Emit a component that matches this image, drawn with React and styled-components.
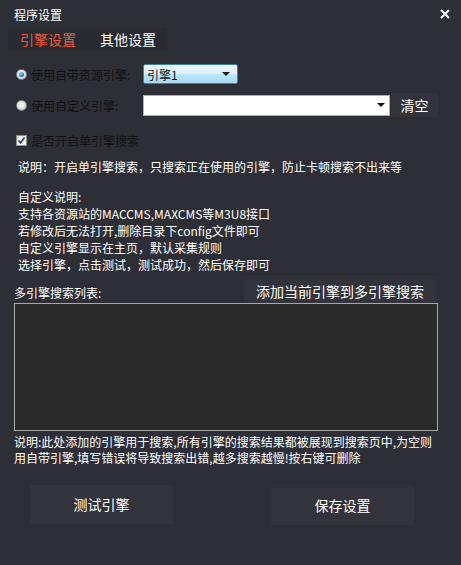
import React from 'react'
import styled, { createGlobalStyle } from 'styled-components'

/* ========================================================================== */
const GlobalStyle = createGlobalStyle`
  body {
    margin: 0;
    background: #2e2e36;
    font-family: "Noto Sans CJK SC", "Noto Sans", sans-serif;
  }
`
const Window = styled.div`
  width: 461px;
  height: 565px;
  background: #2e2e36;
  color: #fff;
  font-size: 12px;
  box-sizing: border-box;
  display: flex;
  flex-direction: column;
  overflow: hidden;
`
const TitleBar = styled.div`
  height: 28px;
  padding: 0 11px 0 14px;
  display: flex;
  align-items: center;
  justify-content: space-between;
  font-size: 12px;
`
const TabBar = styled.div`
  margin-left: 8px;
  width: 159px;
  height: 23px;
  background: #2a2a31;
  display: flex;
  align-items: center;
  padding-left: 12px;
  gap: 24px;
  box-sizing: border-box;
`
const Tab = styled.div`
  font-size: 14px;
  line-height: 23px;
  color: ${p => (p.$active ? '#ea5a3c' : '#fff')};
`
const Body = styled.div`
  padding: 0 16px 0 16px;
  display: flex;
  flex-direction: column;
`
const Row = styled.div`
  display: flex;
  align-items: center;
  height: ${p => p.$h}px;
  margin-top: ${p => p.$mt || 0}px;
`
const Label = styled.label`
  width: ${p => (p.$w ? `${p.$w}px` : 'auto')};
  color: #111;
  font-size: 12px;
  white-space: nowrap;
  display: flex;
  align-items: center;
  gap: 4px;
  flex-shrink: 0;
`
const Radio = styled.span`
  width: 11px;
  height: 11px;
  border-radius: 50%;
  box-sizing: border-box;
  border: 1px solid #8a8a8a;
  background: radial-gradient(circle at 45% 40%, #ffffff 0%, #dcdcdc 60%, #b8b8b8 100%);
  display: flex;
  align-items: center;
  justify-content: center;
  &::after {
    content: '';
    display: ${p => (p.$checked ? 'block' : 'none')};
    width: 5px;
    height: 5px;
    border-radius: 50%;
    background: radial-gradient(circle at 40% 35%, #8fd6ff 0%, #1a7fd0 60%, #0b4f8f 100%);
  }
`
const Select = styled.div`
  width: 95px;
  height: 20px;
  box-sizing: border-box;
  border: 1px solid #3c7fb1;
  border-radius: 2px;
  background: linear-gradient(#ecf7fd, #d9f0fc 50%, #bee6fd 51%, #a7d9f5);
  color: #111;
  display: flex;
  align-items: center;
  justify-content: space-between;
  padding: 0 7px 0 3px;
  font-size: 12px;
`
const Combo = styled.div`
  width: 247px;
  height: 21px;
  box-sizing: border-box;
  border: 1px solid #b0b0b0;
  background: #fff;
  display: flex;
  align-items: center;
  justify-content: flex-end;
  padding-right: 4px;
  margin-right: 1px;
`
const Arrow = styled.span`
  width: 0;
  height: 0;
  border-left: 4px solid transparent;
  border-right: 4px solid transparent;
  border-top: 4px solid #111;
`
const DarkButton = styled.div`
  background: #33333b;
  color: #fff;
  font-size: 14px;
  display: flex;
  align-items: center;
  justify-content: center;
  width: ${p => p.$w}px;
  height: ${p => p.$h}px;
  flex-shrink: 0;
`
const Check = styled.span`
  width: 11px;
  height: 11px;
  box-sizing: border-box;
  border: 1px solid #8f8f8f;
  background: linear-gradient(#e6e6e6, #ffffff);
  display: flex;
  align-items: center;
  justify-content: center;
`
const Note = styled.div`
  padding-left: 2px;
  line-height: ${p => p.$lh || 17.5}px;
  margin-top: ${p => p.$mt || 0}px;
`
const ListHeader = styled.div`
  margin: 6px 0 0 -2px;
  width: 422px;
  display: flex;
  align-items: flex-end;
  justify-content: space-between;
`
const ListLabel = styled.span`
  padding-bottom: 2px;
`
const ListBox = styled.div`
  margin-left: -2px;
  width: 424px;
  height: 128px;
  box-sizing: border-box;
  border: 1px solid #a8a8a8;
  background: #2a2a2a;
`
const BottomNote = styled.div`
  margin: 3px 0 0 -2px;
  line-height: 16.5px;
`
const Footer = styled.div`
  display: flex;
  justify-content: space-between;
  padding: 0 47px 0 30px;
  margin-top: 18px;
  align-items: flex-start;
`

/* ========================================================================== */
const CloseIcon = () => (
  <svg width="10" height="10" viewBox="0 0 10 10">
    <path d="M1 1 L9 9 M9 1 L1 9" stroke="#fff" strokeWidth="2" />
  </svg>
)

const Tick = () => (
  <svg width="9" height="9" viewBox="0 0 9 9">
    <path d="M1.5 4.5 L3.5 7 L7.5 1.5" stroke="#2a3d8f" strokeWidth="1.6" fill="none" />
  </svg>
)

export default function App() {
  return (
    <Window>
      <GlobalStyle />
      <TitleBar>
        <span>程序设置</span>
        <CloseIcon />
      </TitleBar>
      <TabBar>
        <Tab $active>引擎设置</Tab>
        <Tab>其他设置</Tab>
      </TabBar>

      <Body>
        <Row $h={20} $mt={13}>
          <Label $w={127}><Radio $checked />使用自带资源引擎:</Label>
          <Select>
            <span>引擎1</span>
            <Arrow />
          </Select>
        </Row>

        <Row $h={24} $mt={9}>
          <Label $w={127}><Radio />使用自定义引擎:</Label>
          <Combo><Arrow /></Combo>
          <DarkButton $w={47} $h={24}>清空</DarkButton>
        </Row>

        <Row $h={16} $mt={15}>
          <Label><Check><Tick /></Check>是否开启单引擎搜索</Label>
        </Row>

        <Note $mt={10}>说明：开启单引擎搜索，只搜索正在使用的引擎，防止卡顿搜索不出来等</Note>

        <Note $mt={12} $lh={17}>
          自定义说明:<br />
          支持各资源站的MACCMS,MAXCMS等M3U8接口<br />
          若修改后无法打开,删除目录下config文件即可<br />
          自定义引擎显示在主页，默认采集规则<br />
          选择引擎，点击测试，测试成功，然后保存即可
        </Note>

        <ListHeader>
          <ListLabel>多引擎搜索列表:</ListLabel>
          <DarkButton $w={192} $h={24}>添加当前引擎到多引擎搜索</DarkButton>
        </ListHeader>
        <ListBox />

        <BottomNote>
          说明:此处添加的引擎用于搜索,所有引擎的搜索结果都被展现到搜索页中,为空则<br />
          用自带引擎,填写错误将导致搜索出错,越多搜索越慢!按右键可删除
        </BottomNote>
      </Body>

      <Footer>
        <DarkButton $w={143} $h={39}>测试引擎</DarkButton>
        <DarkButton $w={143} $h={39} style={{ marginTop: 1 }}>保存设置</DarkButton>
      </Footer>
    </Window>
  )
}
